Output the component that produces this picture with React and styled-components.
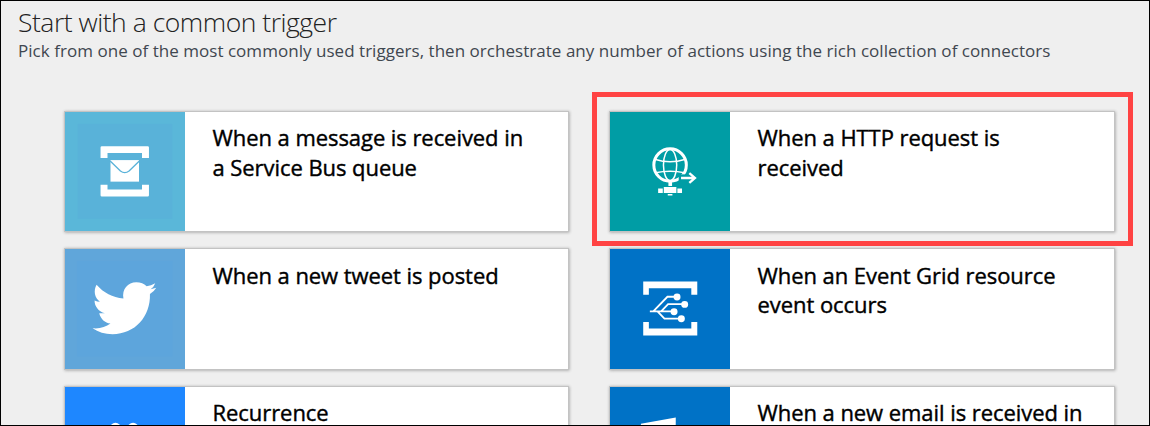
import React from 'react';
import styled, { createGlobalStyle } from 'styled-components';

const GlobalStyle = createGlobalStyle`
  * { box-sizing: border-box; }
  body { margin: 0; background: #efefef; font-family: "Open Sans", "Noto Sans", sans-serif; }
`;

const Page = styled.main`
  height: 426px;
  overflow: hidden;
  border: 1px solid #000;
  background: #efefef;
`;

const Header = styled.header`
  height: 110px;
  padding: 4px 17px 0;
  white-space: nowrap;
`;

const Title = styled.h1`
  margin: 0;
  font-size: 26.5px;
  line-height: 35px;
  font-weight: 300;
  letter-spacing: -0.48px;
  color: #222;
`;

const Subtitle = styled.p`
  margin: 0;
  font-size: 17px;
  line-height: 22px;
  letter-spacing: 0.035px;
  color: #3f4750;
`;

const CardGrid = styled.div`
  display: grid;
  grid-template-columns: 505px 506px;
  grid-auto-rows: 121.4px;
  gap: 16.1px 40px;
  padding-left: 63px;
`;

const Slot = styled.div`
  position: relative;
`;

const Card = styled.article`
  height: 100%;
  display: flex;
  border: 1px solid #c3c3c3;
  background: #fff;
  box-shadow: 0 0 3px 0.5px rgba(0, 0, 0, 0.32);
`;

const Tile = styled.div`
  flex: 0 0 119.5px;
  background: ${(p) => p.$color};
  svg { display: block; width: 119.5px; height: 119.4px; }
`;

const Label = styled.h2`
  margin: 0;
  padding: 11.4px 0 0 28px;
  font-size: 22px;
  line-height: 29.5px;
  font-weight: 400;
  letter-spacing: -0.06px;
  -webkit-text-stroke: 0.4px #000;
  color: #000;
  white-space: pre;
`;

const Highlight = styled.div`
  position: absolute;
  top: -19px;
  left: -17px;
  width: 541px;
  height: 154px;
  border: 5px solid #ff4343;
`;

const ServiceBusIcon = () => (
  <svg viewBox="45 36 360 360">
    <rect x="83" y="72" width="286" height="286" fill="#59b2d9" />
    <path fill="#fff" d="M156 139H294Q298 139 298 143V175H277V160H173V175H152V143Q152 139 156 139ZM152 255H173V270H277V255H298V287Q298 291 294 291H156Q152 291 152 287Z" />
    <path fill="#fff" d="M182 181H268V246H182Z" />
    <path fill="none" stroke="#59b2d9" strokeWidth="4" d="M181 184L212 214Q225 224 238 214L269 184" />
  </svg>
);

const HttpIcon = () => (
  <svg viewBox="75 80 360 360" fill="none" stroke="#fff">
    <circle cx="256" cy="240" r="49" strokeWidth="9" />
    <ellipse cx="256" cy="240" rx="20" ry="47" strokeWidth="4.5" />
    <path strokeWidth="4.5" d="M212 223Q256 237 300 223M212 263Q256 254 300 263" />
    <path stroke="#009da5" strokeWidth="22" d="M282 279H312" />
    <path strokeWidth="7" d="M289 279H331M314 264L331 279L314 294" />
    <path fill="#fff" stroke="none" d="M251 288H262V303H251ZM237 306H275V324H237ZM220 311H234V324H220ZM278 311H292V324H278ZM249 327H263V332H249Z" />
  </svg>
);

const TwitterIcon = () => (
  <svg viewBox="45 29 360 360">
    <rect x="81" y="65" width="288" height="288" fill="#5da5dc" />
    <path fill="#fff" d="M128 268C150 270 167 265 182 254C165 252 153 241 148 223L165 223C145 216 134 202 134 184Q142 188 150 188C134 176 130 155 140 137C161 161 188 176 221 178C216 150 234 129 260 129C273 129 283 133 291 141Q304 139 317 132Q313 143 303 150Q312 149 320 146Q313 158 301 165C303 233 256 286 188 286C165 286 145 280 128 268Z" />
  </svg>
);

const EventGridIcon = () => (
  <svg viewBox="30 29 360 360">
    <path fill="#fff" d="M130 127H293V167H275V147H147V167H130ZM130 249H147V269H275V249H293V290H130Z" />
    <path fill="none" stroke="#fff" strokeWidth="5.5" d="M150 217H223M161 216L203 173H232M184 217L205 195H254M173 217L194 239H244" />
    <g fill="#fff">
      <circle cx="232" cy="174" r="10.5" />
      <circle cx="255" cy="196" r="10.5" />
      <circle cx="223" cy="218" r="10.5" />
      <circle cx="245" cy="239" r="10.5" />
    </g>
  </svg>
);

const RecurrenceIcon = () => (
  <svg viewBox="45 441 360 360">
    <g fill="#fff">
      <circle cx="197" cy="566" r="17" />
      <circle cx="250" cy="566" r="17" />
    </g>
    <circle cx="224" cy="620" r="50" fill="#1e87ff" stroke="#fff" strokeWidth="12" />
    <path fill="none" stroke="#fff" strokeWidth="10" d="M224 588V622H246" />
  </svg>
);

const EmailIcon = () => (
  <svg viewBox="30 441 360 360" fill="#fff">
    <path d="M123 552L228 533V708L123 689Z" />
    <path d="M234 566H298V670H234Z" />
  </svg>
);

const triggers = [
  { text: 'When a message is received in\na Service Bus queue', color: '#5ab7d9', Icon: ServiceBusIcon },
  { text: 'When a HTTP request is\nreceived', color: '#009da5', Icon: HttpIcon, highlighted: true },
  { text: 'When a new tweet is posted', color: '#60a6da', Icon: TwitterIcon },
  { text: 'When an Event Grid resource\nevent occurs', color: '#0072c6', Icon: EventGridIcon },
  { text: 'Recurrence', color: '#1e87ff', Icon: RecurrenceIcon },
  { text: 'When a new email is received in', color: '#0072c6', Icon: EmailIcon },
];

export default function App() {
  return (
    <>
      <GlobalStyle />
      <Page>
        <Header>
          <Title>Start with a common trigger</Title>
          <Subtitle>
            Pick from one of the most commonly used triggers, then orchestrate any number of actions using the rich
            collection of connectors
          </Subtitle>
        </Header>
        <CardGrid>
          {triggers.map(({ text, color, Icon, highlighted }) => (
            <Slot key={text}>
              <Card>
                <Tile $color={color}>
                  <Icon />
                </Tile>
                <Label>{text}</Label>
              </Card>
              {highlighted && <Highlight />}
            </Slot>
          ))}
        </CardGrid>
      </Page>
    </>
  );
}
